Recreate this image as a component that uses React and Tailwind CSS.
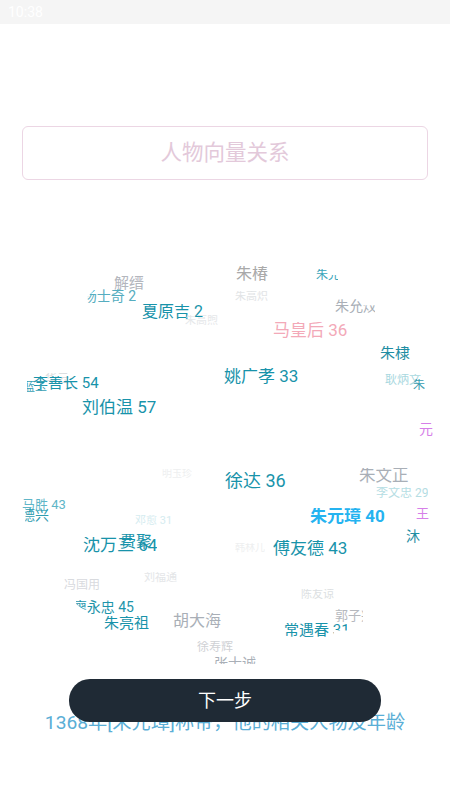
const FONT = "font-['Roboto','Noto_Sans_CJK_SC',sans-serif]";

// word cloud: each word sits at its own place on the canvas
const words = [
  { text: "解缙", cls: "left-[114px] top-[35px] text-[15px] text-[#b3b6bd]" },
  { text: "杨士奇 2", cls: "left-[87px] top-[48px] w-[49px] justify-end text-[14px] text-[#55adc0] [clip-path:polygon(0_0,100%_0,100%_100%,0_100%,0_60%,8px_0)]" },
  { text: "夏原吉 2", cls: "left-[142px] top-[63px] text-[16px] text-[#1893aa]" },
  { text: "朱高煦", cls: "left-[185px] top-[74px] text-[11px] text-[#e6e8ea]" },
  { text: "朱椿", cls: "left-[236px] top-[25px] text-[16px] text-[#a9a9a9]" },
  { text: "朱高炽", cls: "left-[235px] top-[50px] text-[11px] text-[#e2e4e6]" },
  { text: "朱允", cls: "left-[316px] top-[28px] w-[22px] text-[12px] text-[#3aa5ba] [clip-path:polygon(0_0,12px_0,12px_50%,100%_50%,100%_100%,0_100%)]" },
  { text: "朱允炆", cls: "left-[335px] top-[58px] w-[40px] text-[14px] text-[#a9afb7] [clip-path:polygon(0_0,28px_0,28px_45%,100%_45%,100%_100%,0_100%)]" },
  { text: "马皇后 36", cls: "left-[273px] top-[81px] text-[17px] text-[#f3a9b8]" },
  { text: "朱棣", cls: "left-[380px] top-[105px] text-[15px] text-[#1f8ea3]" },
  { text: "姚广孝 33", cls: "left-[224px] top-[127px] text-[17px] text-[#1893aa]" },
  { text: "耿炳文", cls: "left-[385px] top-[133px] text-[12px] text-[#a9d8e0]" },
  { text: "朱", cls: "left-[413px] top-[138px] text-[12px] text-[#3a9db0]" },
  { text: "华云", cls: "left-[45px] top-[132px] text-[12px] text-[#dcdee0]" },
  { text: "李善长 54", cls: "left-[33px] top-[135px] text-[15px] text-[#1893aa]" },
  { text: "蓝玉", cls: "left-[27px] top-[140px] w-[20px] justify-end text-[12px] text-[#3aa0b4]" },
  { text: "刘伯温 57", cls: "left-[82px] top-[158px] text-[17px] text-[#1893aa]" },
  { text: "元", cls: "left-[419px] top-[181px] text-[14px] text-[#d67fe8]" },
  { text: "明玉珍", cls: "left-[162px] top-[228px] text-[10px] text-[#eeeff0]" },
  { text: "朱文正", cls: "left-[359px] top-[227px] text-[16.5px] text-[#a9afb7]" },
  { text: "徐达 36", cls: "left-[225px] top-[231px] text-[18px] text-[#1893aa]" },
  { text: "李文忠 29", cls: "left-[376px] top-[246px] text-[12px] text-[#b5dde3]" },
  { text: "马胜 43", cls: "left-[22px] top-[257px] text-[13px] text-[#5fb6c8]" },
  { text: "周德兴", cls: "left-[25px] top-[267px] w-[24px] justify-end text-[14px] text-[#2f9cb0]" },
  { text: "王", cls: "left-[416px] top-[266px] text-[13px] text-[#d67fe8]" },
  { text: "朱元璋 40", cls: "left-[310px] top-[267px] text-[17px] font-bold text-[#25b3f0]" },
  { text: "邓愈 31", cls: "left-[135px] top-[274px] text-[11px] text-[#d5ecf0]" },
  { text: "沐", cls: "left-[406px] top-[288px] text-[14px] text-[#1f8ea3]" },
  { text: "沈万三 64", cls: "left-[83px] top-[296px] text-[17px] text-[#1893aa]" },
  { text: "费聚", cls: "left-[120px] top-[293px] text-[16px] text-[#1893aa]" },
  { text: "傅友德 43", cls: "left-[273px] top-[299px] text-[17px] text-[#1893aa]" },
  { text: "韩林儿", cls: "left-[235px] top-[302px] text-[10px] text-[#eeeff0]" },
  { text: "刘福通", cls: "left-[144px] top-[331px] text-[11px] text-[#e4e6e8]" },
  { text: "冯国用", cls: "left-[64px] top-[338px] text-[12px] text-[#d8dade]" },
  { text: "陈友谅", cls: "left-[301px] top-[348px] text-[11px] text-[#dcdfe2]" },
  { text: "廖永忠 45", cls: "left-[76px] top-[359px] w-[58px] justify-end text-[14px] text-[#1f95ab] [clip-path:polygon(0_0,100%_0,100%_100%,14px_100%,0_30%)]" },
  { text: "朱亮祖", cls: "left-[104px] top-[375px] text-[15px] text-[#1893aa]" },
  { text: "胡大海", cls: "left-[173px] top-[372px] text-[16px] text-[#a9afb7]" },
  { text: "郭子兴", cls: "left-[335px] top-[368px] w-[28px] text-[13px] text-[#b5b8bd]" },
  { text: "常遇春 31", cls: "left-[284px] top-[382px] w-[63px] text-[15px] text-[#1893aa] [clip-path:polygon(0_0,100%_0,100%_50%,50px_50%,50px_100%,0_100%)]" },
  { text: "徐寿辉", cls: "left-[197px] top-[400px] text-[12px] text-[#cfd1d5]" },
  { text: "张士诚", cls: "left-[214px] top-[415px] text-[14px] text-[#a9afb7]" },
];

export default function App() {
  return (
    <div className={`relative w-[450px] h-[800px] overflow-hidden bg-white ${FONT}`}>
      <div className="h-6 bg-[#f5f5f5] pl-2 flex items-center text-[14px] text-white">
        10:38
      </div>

      <div className="mt-[102px] mx-[22px] h-[54px] pt-[1px] rounded-md border border-[#ecd6e4] flex items-center justify-center text-[21.5px] text-[#e3c9da]">
        人物向量关系
      </div>

      <div className="relative mt-[61px] h-[423px] overflow-hidden">
        {words.map((w) => (
          <span
            key={w.text + w.cls}
            className={`absolute flex overflow-hidden whitespace-nowrap leading-none ${w.cls}`}
          >
            {w.text}
          </span>
        ))}
      </div>

      <div className="mt-[49px] text-center text-[19.2px] leading-none text-[#5aaed6]">
        1368年[朱元璋]称帝，他的相关人物及年龄
      </div>

      <button className="absolute left-[69px] top-[679px] w-[312px] h-[43px] rounded-[21px] bg-[#1f2a35] text-[18px] text-white">
        下一步
      </button>
    </div>
  );
}
